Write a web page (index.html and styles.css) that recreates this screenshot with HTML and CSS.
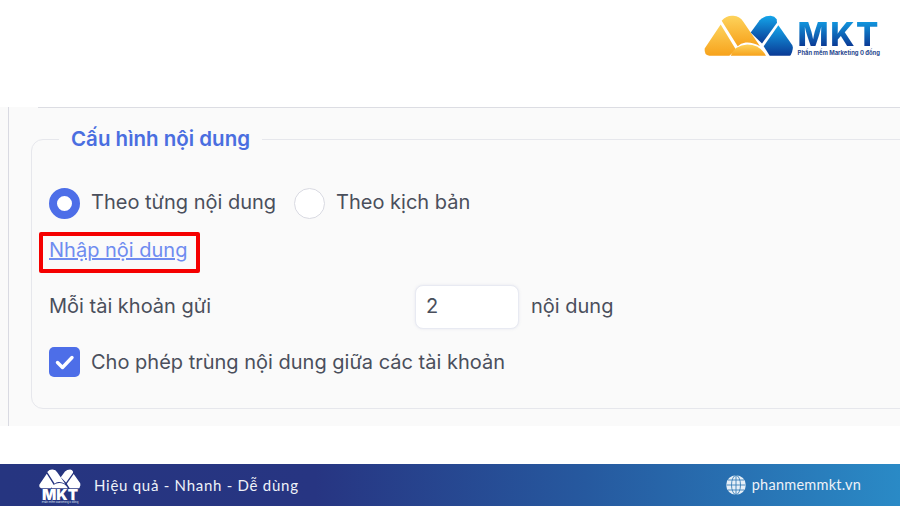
FILE: index.html
```html
<!DOCTYPE html>
<html lang="vi">
<head>
<meta charset="utf-8">
<title>Cấu hình nội dung</title>
<link rel="stylesheet" href="styles.css">
</head>
<body>
<header class="top">
  <div class="brand">
    <svg class="brand-mark" viewBox="40 45 270 125" width="90" height="42">
      <defs>
        <linearGradient id="org" x1="0" y1="0" x2="0" y2="1"><stop offset="0" stop-color="#fdd35c"/><stop offset="1" stop-color="#f7a21b"/></linearGradient>
        <linearGradient id="blu" x1="0" y1="0" x2="0" y2="1"><stop offset="0" stop-color="#14a5ea"/><stop offset="1" stop-color="#0a3a95"/></linearGradient>
      </defs>
      <path d="M90 73 L137 150 Q124 158 116 167 H56 Q40 165 42 145 Z" fill="url(#org)"/>
      <path d="M93 62 Q108 45 128 47 Q148 48 158 65 L208 138 Q185 125 165 127 Q150 129 141 138 Z" fill="url(#org)"/>
      <path d="M120 167 Q132 135 170 133 Q208 133 226 167 Z" fill="url(#org)"/>
      <path d="M180 97 L207 60 Q220 47 240 47 Q252 48 258 57 L259 68 L214 130 Z" fill="url(#blu)"/>
      <path d="M263 75 L305 135 Q310 145 300 165 L297 167 H237 L219 138 Z" fill="url(#blu)"/>
    </svg>
    <div class="brand-text">
      <span class="brand-name">MKT</span>
      <span class="brand-tag">Phần mềm Marketing 0 đồng</span>
    </div>
  </div>
</header>

<main class="panel">
  <div class="panel-inner">
    <div class="rule"></div>
    <fieldset class="card">
      <legend class="card-title">Cấu hình nội dung</legend>
      <div class="radios">
        <label class="option option-top"><span class="radio radio-on"></span>Theo từng nội dung</label>
        <label class="option option-top"><span class="radio"></span>Theo kịch bản</label>
      </div>
      <div class="link-row"><a class="link" href="#">Nhập nội dung</a></div>
      <div class="count-row">
        <span class="count-label">Mỗi tài khoản gửi</span>
        <span class="input">2</span>
        <span class="count-unit">nội dung</span>
      </div>
      <label class="option check-row">
        <span class="check">
          <svg viewBox="0 0 31 30" width="31" height="30"><path d="M8.5 15.5 L13.5 20.5 L23 10.5" fill="none" stroke="#fff" stroke-width="3.4" stroke-linecap="round" stroke-linejoin="round"/></svg>
        </span>
        Cho phép trùng nội dung giữa các tài khoản
      </label>
    </fieldset>
  </div>
</main>

<footer class="foot">
  <div class="foot-left">
    <div class="foot-logo">
      <svg viewBox="40 45 270 125" width="42" height="20">
        <path d="M90 73 L137 150 Q124 158 116 167 H56 Q40 165 42 145 Z M93 62 Q108 45 128 47 Q148 48 158 65 L208 138 Q185 125 165 127 Q150 129 141 138 Z M120 167 Q132 135 170 133 Q208 133 226 167 Z M180 97 L207 60 Q220 47 240 47 Q252 48 258 57 L259 68 L214 130 Z M263 75 L305 135 Q310 145 300 165 L297 167 H237 L219 138 Z" fill="#fff"/>
      </svg>
      <span class="foot-logo-name">MKT</span>
      <span class="foot-logo-tag">Phần mềm Marketing 0 đồng</span>
    </div>
    <span class="slogan">Hiệu quả - Nhanh - Dễ dùng</span>
  </div>
  <div class="foot-right">
    <svg viewBox="0 0 20 20" width="20" height="20">
      <circle cx="10" cy="10" r="9.8" fill="#e6eff7"/>
      <g fill="none" stroke="#3a7fb8" stroke-width="0.9">
        <ellipse cx="10" cy="10" rx="4.5" ry="9.6"/>
        <path d="M10 .4 V19.6 M.4 10 H19.6 M2 5 H18 M2 15 H18"/>
      </g>
    </svg>
    <span class="site">phanmemmkt.vn</span>
  </div>
</footer>
</body>
</html>
```
FILE: styles.css
```css
* { box-sizing: border-box; }
html, body { margin: 0; padding: 0; }
body {
  width: 900px;
  height: 506px;
  overflow: hidden;
  background: #fff;
  font-family: "Inter", "Noto Sans", sans-serif;
  color: #4a4f5c;
  display: flex;
  flex-direction: column;
}
.top {
  height: 107px;
  display: flex;
  justify-content: flex-end;
  align-items: flex-start;
  padding: 15px 20px 0 0;
}
.brand { display: flex; align-items: flex-start; gap: 4px; }
.brand-mark { display: block; }
.brand-text { display: flex; flex-direction: column; padding-top: 4px; }
.brand-name {
  font: 800 33px/30px "Inter", sans-serif;
  letter-spacing: 1.5px;
  background: linear-gradient(#12a0e6, #0a2f8c);
  -webkit-background-clip: text;
  background-clip: text;
  color: transparent;
}
.brand-tag {
  font: 700 5.9px/8px "Inter", sans-serif;
  color: #2b4a8f;
  white-space: nowrap;
}
.panel {
  height: 319px;
  background: #fafafa;
  padding-left: 8px;
  overflow: hidden;
  flex: none;
}
.panel-inner {
  height: 100%;
  border-left: 1px solid #d9dae2;
  padding-left: 22px;
}
.rule {
  height: 1px;
  margin-left: 7px;
  background: #dcdde3;
}
.card {
  margin: 19px -40px 0 0;
  padding: 0 0 0 17px;
  height: 282px;
  border: 1px solid #e6e7ec;
  border-radius: 12px;
  min-width: 0;
}
.card-title {
  margin-left: 10px;
  padding: 0 12px;
  font-size: 20.5px;
  line-height: 24px;
  font-weight: 600;
  color: #4a6ee0;
}
.radios { display: flex; gap: 18px; height: 30px; margin-top: 37px; }
.option {
  display: flex;
  align-items: center;
  gap: 11px;
  font-size: 20px;
  line-height: 30px;
  color: #4a4f5c;
}
.option-top {
  align-items: flex-start;
  line-height: 29px;
}
.radio {
  width: 31px;
  height: 31px;
  border-radius: 50%;
  border: 1px solid #d9dae2;
  background: #fff;
  flex: none;
}
.radio-on { border: 8px solid #4d6ee8; }
.link-row { margin-top: 19px; height: 32px; position: relative; }
.link {
  font-size: 20px;
  line-height: 26px;
  color: #6f8cf0;
  text-decoration: underline;
  position: relative;
  display: inline-block;
}
.link::after {
  content: "";
  position: absolute;
  left: -10px;
  right: -13px;
  top: -5px;
  bottom: -10px;
  border: 4px solid #f50000;
  border-radius: 2px;
}
.count-row {
  display: flex;
  align-items: center;
  margin-top: 16px;
  height: 44px;
  font-size: 20px;
}
.count-label { width: 366px; padding-bottom: 2px; }
.count-unit { padding-bottom: 2px; }
.input {
  width: 104px;
  height: 44px;
  margin-right: 12px;
  padding-left: 10px;
  line-height: 40px;
  background: #fff;
  border: 1px solid #e8eaf2;
  border-radius: 8px;
  box-shadow: 0 0 3px rgba(120, 130, 180, .15);
}
.check-row { margin-top: 18px; }
.check {
  width: 31px;
  height: 30px;
  border-radius: 5px;
  background: #4d6ee8;
  flex: none;
}
.check svg { display: block; }
.foot {
  margin-top: 38px;
  height: 42px;
  flex: none;
  display: flex;
  justify-content: space-between;
  align-items: center;
  padding: 0 39px;
  background: linear-gradient(90deg, #263580 0%, #273582 35%, #26599f 65%, #2a8ac6 100%);
  color: #eef2f8;
}
.foot-left { display: flex; align-items: center; gap: 13px; }
.foot-logo { display: flex; flex-direction: column; align-items: center; width: 42px; padding-top: 2px; }
.foot-logo svg { display: block; }
.foot-logo-name {
  font: 900 15px/11px "Inter", sans-serif;
  color: #fff;
}
.foot-logo-tag {
  font: 400 2.7px/4px "Inter", sans-serif;
  color: #dfe5f2;
  white-space: nowrap;
}
.slogan {
  font: 400 15px/20px "Lato", sans-serif;
  letter-spacing: .73px;
}
.foot-right { display: flex; align-items: center; gap: 6px; }
.site {
  font: 400 14.5px/20px "Lato", sans-serif;
  letter-spacing: .25px;
}
```
